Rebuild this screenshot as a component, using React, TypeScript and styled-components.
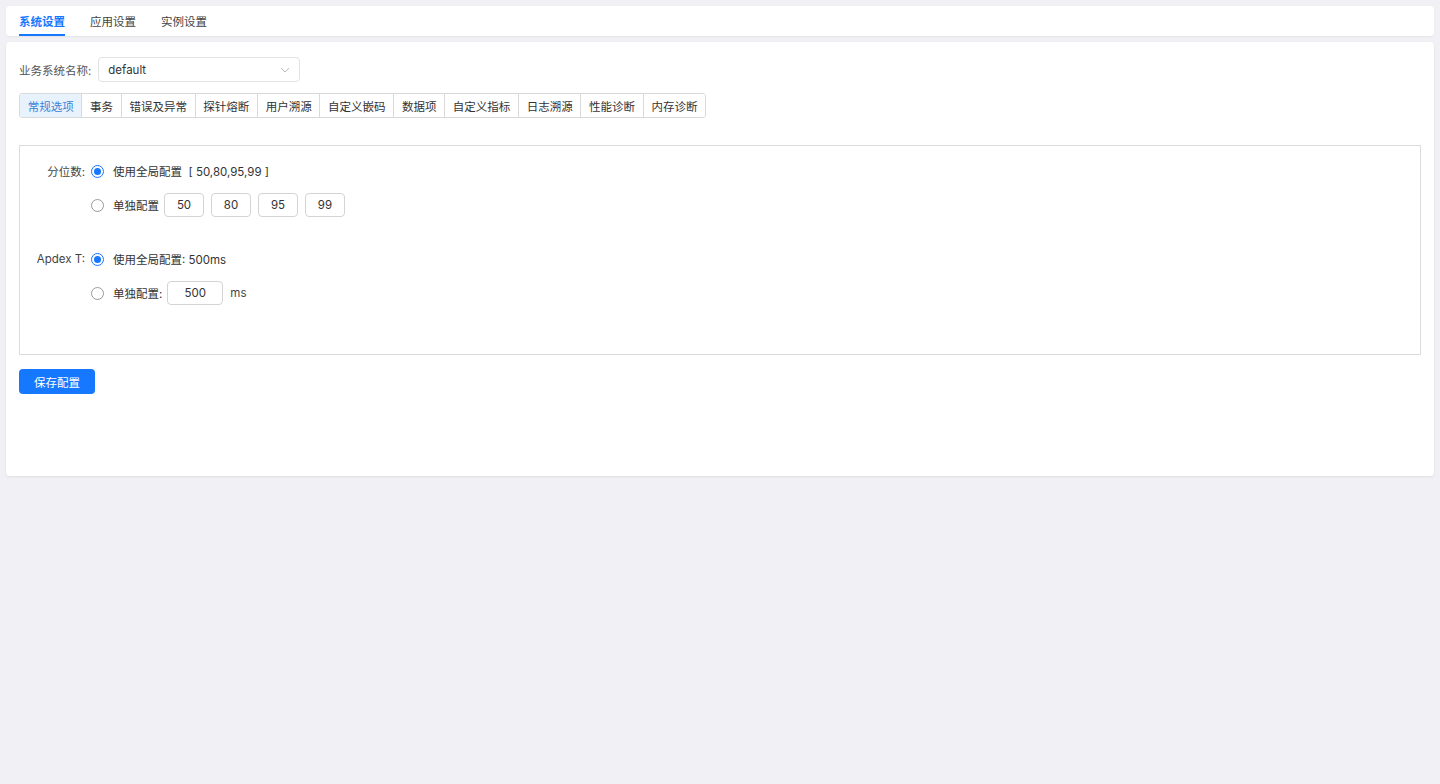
import { useState } from "react";
import styled, { createGlobalStyle } from "styled-components";

const GlobalStyle = createGlobalStyle`
  html, body {
    margin: 0;
    padding: 0;
    background: #f0f0f5;
    font-family: Inter, "Noto Sans CJK SC", sans-serif;
    font-size: 11.5px;
    color: #333;
  }
  * { box-sizing: border-box; }
`;

const topTabs = ["系统设置", "应用设置", "实例设置"];
const segments = [
  "常规选项",
  "事务",
  "错误及异常",
  "探针熔断",
  "用户溯源",
  "自定义嵌码",
  "数据项",
  "自定义指标",
  "日志溯源",
  "性能诊断",
  "内存诊断",
];
const percentiles = ["50", "80", "95", "99"];

export default function App() {
  const [topIdx, setTopIdx] = useState(0);
  const [segIdx, setSegIdx] = useState(0);
  const [pctMode, setPctMode] = useState<"global" | "own">("global");
  const [apdexMode, setApdexMode] = useState<"global" | "own">("global");

  return (
    <>
      <GlobalStyle />
      <SPage>
        <STopBar>
          {topTabs.map((t, i) => (
            <STopTab key={t} active={topIdx === i} onClick={() => setTopIdx(i)}>
              {t}
            </STopTab>
          ))}
        </STopBar>

        <SCard>
          <SFieldRow>
            <SFieldLabel>业务系统名称:</SFieldLabel>
            <SSelect>
              <span>default</span>
              <svg width="12" height="12" viewBox="0 0 12 12">
                <path d="M2 4l4 4 4-4" fill="none" stroke="#bbb" strokeWidth="1" />
              </svg>
            </SSelect>
          </SFieldRow>

          <SSegments>
            {segments.map((s, i) => (
              <SSegment key={s} active={segIdx === i} onClick={() => setSegIdx(i)}>
                {s}
              </SSegment>
            ))}
          </SSegments>

          <SConfigBox>
            <SOptionRow>
              <SLabel>分位数:</SLabel>
              <SRadioWrap onClick={() => setPctMode("global")}>
                <SRadio checked={pctMode === "global"} />
                使用全局配置&nbsp;&nbsp;[ 50,80,95,99 ]
              </SRadioWrap>
            </SOptionRow>
            <SOptionRow>
              <SLabel />
              <SRadioWrap onClick={() => setPctMode("own")}>
                <SRadio checked={pctMode === "own"} />
                单独配置
              </SRadioWrap>
              <SInputs>
                {percentiles.map((p) => (
                  <SNumInput key={p} width={40} defaultValue={p} />
                ))}
              </SInputs>
            </SOptionRow>

            <SGroupGap />

            <SOptionRow>
              <SLabel>Apdex T:</SLabel>
              <SRadioWrap onClick={() => setApdexMode("global")}>
                <SRadio checked={apdexMode === "global"} />
                使用全局配置: 500ms
              </SRadioWrap>
            </SOptionRow>
            <SOptionRow>
              <SLabel />
              <SRadioWrap onClick={() => setApdexMode("own")}>
                <SRadio checked={apdexMode === "own"} />
                单独配置:
              </SRadioWrap>
              <SInputs>
                <SNumInput width={56} defaultValue="500" />
                <SUnit>ms</SUnit>
              </SInputs>
            </SOptionRow>
          </SConfigBox>

          <SSaveButton>保存配置</SSaveButton>
        </SCard>
      </SPage>
    </>
  );
}

const SPage = styled.div`
  min-height: 784px;
  padding: 6px 6px;
  display: flex;
  flex-direction: column;
  gap: 6px;
`;

const STopBar = styled.div`
  height: 30px;
  background: #fff;
  border-radius: 4px;
  box-shadow: 0 1px 2px rgba(0, 0, 0, 0.05);
  display: flex;
  align-items: stretch;
  gap: 25px;
  padding: 0 13px;
`;

const STopTab = styled.div<{ active: boolean }>`
  display: flex;
  align-items: center;
  padding-top: 1px;
  cursor: pointer;
  color: ${(p) => (p.active ? "#1677ff" : "#444")};
  font-weight: ${(p) => (p.active ? 600 : 400)};
  border-bottom: 2px solid ${(p) => (p.active ? "#1677ff" : "transparent")};
`;

const SCard = styled.div`
  height: 434px;
  background: #fff;
  border-radius: 4px;
  box-shadow: 0 1px 3px rgba(0, 0, 0, 0.08);
  padding: 15px 13px;
  display: flex;
  flex-direction: column;
  align-items: flex-start;
`;

const SFieldRow = styled.div`
  display: flex;
  align-items: center;
  gap: 7px;
`;

const SFieldLabel = styled.span`
  color: #555;
`;

const SSelect = styled.div`
  width: 202px;
  height: 25px;
  border: 1px solid #e2e2e2;
  border-radius: 4px;
  display: flex;
  align-items: center;
  justify-content: space-between;
  padding: 0 8px 0 9px;
  color: #333;
`;

const SSegments = styled.div`
  margin-top: 11px;
  display: flex;
  border: 1px solid #d9d9d9;
  border-radius: 3px;
  overflow: hidden;
`;

const SSegment = styled.div<{ active: boolean }>`
  height: 23px;
  display: flex;
  align-items: center;
  padding: 0 7.7px;
  cursor: pointer;
  background: ${(p) => (p.active ? "#e8f2fd" : "#fff")};
  color: ${(p) => (p.active ? "#3b82d6" : "#333")};
  & + & {
    border-left: 1px solid #d9d9d9;
  }
`;

const SConfigBox = styled.div`
  margin-top: 27px;
  align-self: stretch;
  height: 210px;
  border: 1px solid #dcdcdc;
  padding: 8px 0 0 0;
  display: flex;
  flex-direction: column;
`;

const SOptionRow = styled.div`
  height: 34px;
  display: flex;
  align-items: center;
`;

const SGroupGap = styled.div`
  height: 20px;
`;

const SLabel = styled.span`
  width: 71px;
  text-align: right;
  color: #444;
  padding-right: 6px;
`;

const SRadioWrap = styled.label`
  display: flex;
  align-items: center;
  gap: 9px;
  cursor: pointer;
  color: #333;
`;

const SRadio = styled.span<{ checked: boolean }>`
  width: 13px;
  height: 13px;
  border-radius: 50%;
  border: 1px solid ${(p) => (p.checked ? "#1677ff" : "#999")};
  background: #fff;
  display: inline-flex;
  align-items: center;
  justify-content: center;
  &::after {
    content: "";
    width: 7px;
    height: 7px;
    border-radius: 50%;
    background: ${(p) => (p.checked ? "#1677ff" : "transparent")};
  }
`;

const SInputs = styled.div`
  display: flex;
  align-items: center;
  gap: 7px;
  margin-left: 5px;
`;

const SNumInput = styled.input<{ width: number }>`
  width: ${(p) => p.width}px;
  height: 24px;
  border: 1px solid #d4d4d4;
  border-radius: 4px;
  text-align: center;
  font: inherit;
  color: #333;
  outline: none;
`;

const SUnit = styled.span`
  color: #444;
`;

const SSaveButton = styled.button`
  margin-top: 14px;
  width: 76px;
  height: 25px;
  background: #1677ff;
  color: #fff;
  border: none;
  border-radius: 4px;
  font: inherit;
  cursor: pointer;
`;
